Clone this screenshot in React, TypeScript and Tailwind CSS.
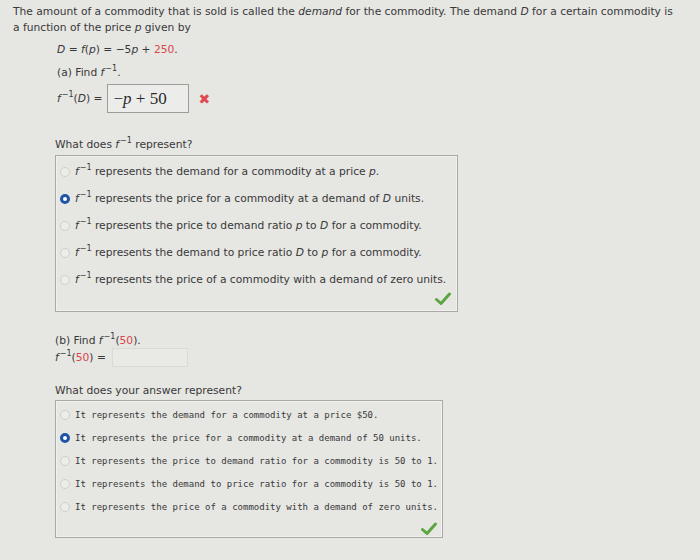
const Finv = ({ arg }: { arg?: React.ReactNode }) => (
  <span className="whitespace-nowrap">
    <i>f</i>
    <span className="text-[8px] leading-[0] align-[5px] ml-[1px]">−1</span>
    {arg}
  </span>
);

const Radio = ({ on }: { on?: boolean }) =>
  on ? (
    <span className="inline-block w-[10px] h-[10px] rounded-full border-[3px] border-[#1f55a8] bg-white shrink-0" />
  ) : (
    <span className="inline-block w-[10px] h-[10px] rounded-full border border-[#cfcfcb] bg-[#ecece9] shrink-0" />
  );

const Check = () => (
  <svg width="16" height="13" viewBox="0 0 16 13">
    <path d="M1.5 7.5 L6 11.5 L14.5 2" fill="none" stroke="#5ba642" strokeWidth="3" strokeLinecap="round" strokeLinejoin="round" />
  </svg>
);

const firstOptions: { on?: boolean; text: React.ReactNode }[] = [
  { text: <> represents the demand for a commodity at a price <i>p</i>.</> },
  { on: true, text: <> represents the price for a commodity at a demand of <i>D</i> units.</> },
  { text: <> represents the price to demand ratio <i>p</i> to <i>D</i> for a commodity.</> },
  { text: <> represents the demand to price ratio <i>D</i> to <i>p</i> for a commodity.</> },
  { text: <> represents the price of a commodity with a demand of zero units.</> },
];

const secondOptions = [
  { text: "It represents the demand for a commodity at a price $50." },
  { on: true, text: "It represents the price for a commodity at a demand of 50 units." },
  { text: "It represents the price to demand ratio for a commodity is 50 to 1." },
  { text: "It represents the demand to price ratio for a commodity is 50 to 1." },
  { text: "It represents the price of a commodity with a demand of zero units." },
];

export default function App() {
  return (
    <div className="w-[700px] h-[560px] overflow-hidden bg-[#e6e6e3] text-[#383838] text-[10.7px] leading-[16px] font-['DejaVu_Sans',sans-serif]">
      <div className="pl-[13px] pr-[20px] pt-[4px]">
        <p>
          The amount of a commodity that is sold is called the <i>demand</i> for the commodity. The demand <i>D</i> for a certain commodity is a function of the price <i>p</i> given by
        </p>
        <div className="pl-[44px]">
          <p className="mt-[6px]">
            <i>D</i> = <i>f</i>(<i>p</i>) = −5<i>p</i> + <span className="text-[#d8474a]">250</span>.
          </p>
          <p className="mt-[7px]">
            (a) Find <Finv />.
          </p>
          <div className="mt-[3px] flex items-center">
            <span>
              <Finv arg={<>(<i>D</i>)</>} /> =
            </span>
            <span className="ml-[4px] w-[82px] h-[29px] border border-[#9d9d9a] bg-[#ececea] flex items-center pl-[6px] text-[17px] font-['Liberation_Serif',serif] text-[#2a2a2a]">
              −<i>p</i>&nbsp;+&nbsp;50
            </span>
            <span className="ml-[10px] text-[#e0494f] text-[14px] font-bold leading-none">✖</span>
          </div>
        </div>

        <div className="pl-[42px] mt-[24px]">
          <p>
            What does <Finv /> represent?
          </p>
          <div className="mt-[2px] w-[403px] h-[157px] border border-[#a9a9a5] shadow-[inset_0_0_0_1px_#f0f0ee] px-[4px] pt-[3px] relative">
            {firstOptions.map((o, i) => (
              <div key={i} className="flex items-center gap-[3px] h-[26.8px] whitespace-nowrap">
                <Radio on={o.on} />
                <span className="ml-[2px]">
                  <Finv />
                  {o.text}
                </span>
              </div>
            ))}
            <div className="absolute right-[6px] bottom-[6px]">
              <Check />
            </div>
          </div>

          <p className="mt-[21px]">
            (b) Find <Finv arg={<>(<span className="text-[#d8474a]">50</span>)</>} />.
          </p>
          <div className="flex items-center h-[17px]">
            <span>
              <Finv arg={<>(<span className="text-[#d8474a]">50</span>)</>} /> =
            </span>
            <span className="ml-[6px] w-[76px] h-[19px] border border-[#dadad7] bg-[#e9e9e6]" />
          </div>

          <p className="mt-[17px]">What does your answer represent?</p>
          <div className="mt-[1px] w-[388px] h-[138px] border border-[#a9a9a5] shadow-[inset_0_0_0_1px_#f0f0ee] px-[4px] pt-[2px] relative font-['DejaVu_Sans_Mono',monospace] text-[9px]">
            {secondOptions.map((o, i) => (
              <div key={i} className="flex items-center gap-[4px] h-[23px] whitespace-nowrap">
                <Radio on={o.on} />
                <span className="ml-[1px]">{o.text}</span>
              </div>
            ))}
            <div className="absolute right-[5px] bottom-[2px]">
              <Check />
            </div>
          </div>
        </div>
      </div>
    </div>
  );
}
